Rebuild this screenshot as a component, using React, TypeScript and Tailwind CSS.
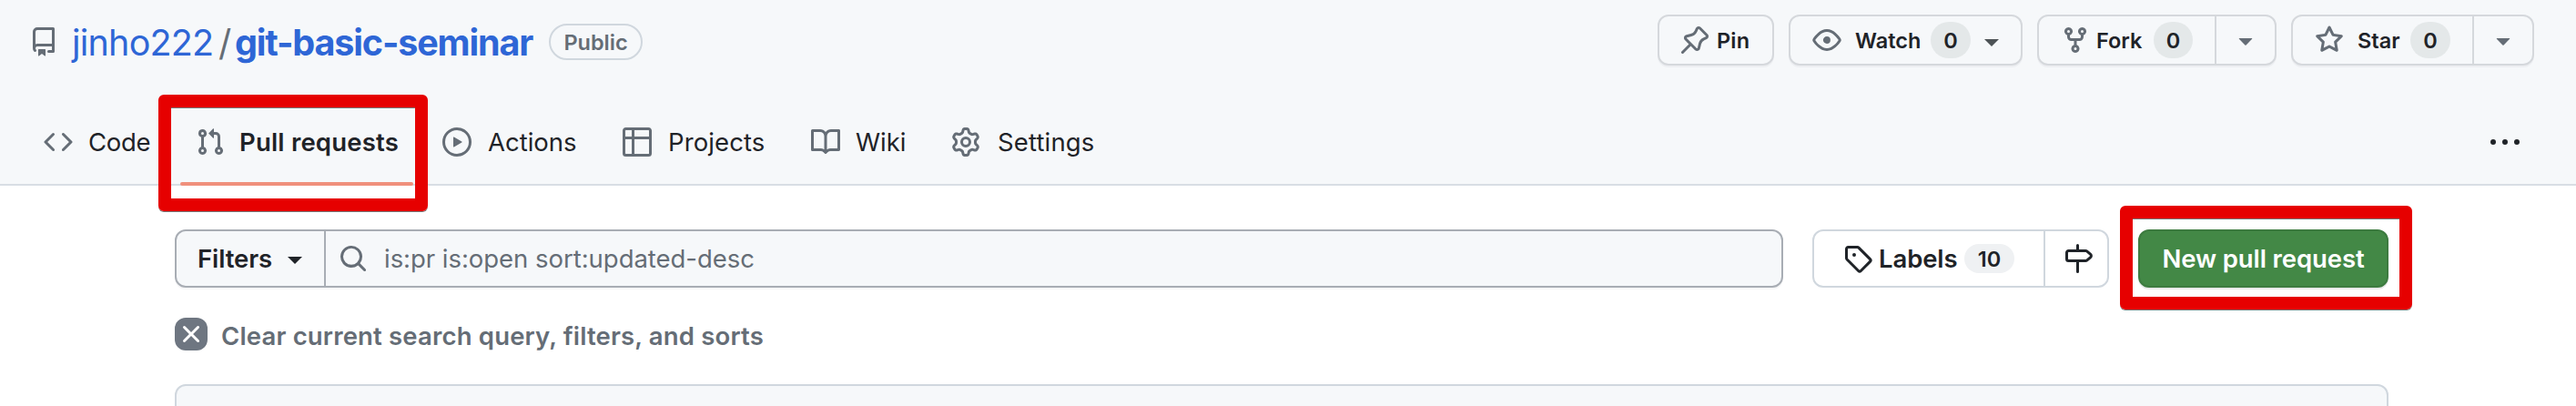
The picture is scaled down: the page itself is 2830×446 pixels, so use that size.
import type { ReactNode } from "react";

const paths = {
  repo: "M2 2.5A2.5 2.5 0 0 1 4.5 0h8.75a.75.75 0 0 1 .75.75v12.5a.75.75 0 0 1-.75.75h-2.5a.75.75 0 0 1 0-1.5h1.75v-2h-8a1 1 0 0 0-.714 1.7.75.75 0 1 1-1.072 1.05A2.495 2.495 0 0 1 2 11.5Zm10.5-1h-8a1 1 0 0 0-1 1v6.708A2.486 2.486 0 0 1 4.5 9h8ZM5 12.25a.25.25 0 0 1 .25-.25h3.5a.25.25 0 0 1 .25.25v3.25a.25.25 0 0 1-.4.2l-1.45-1.087a.249.249 0 0 0-.3 0L5.4 15.7a.25.25 0 0 1-.4-.2Z",
  pin: "m11.294.984 3.722 3.722a1.75 1.75 0 0 1-.504 2.826l-1.327.613a3.089 3.089 0 0 0-1.707 2.084l-.584 2.454c-.317 1.332-1.972 1.8-2.94.832L5.75 11.311 1.78 15.28a.749.749 0 1 1-1.06-1.06l3.969-3.97-2.204-2.204c-.968-.968-.5-2.623.832-2.94l2.454-.584a3.08 3.08 0 0 0 2.084-1.707l.613-1.327a1.75 1.75 0 0 1 2.826-.504ZM6.283 9.723l2.732 2.731a.25.25 0 0 0 .42-.119l.584-2.454a4.586 4.586 0 0 1 2.537-3.098l1.328-.613a.25.25 0 0 0 .072-.404l-3.722-3.722a.25.25 0 0 0-.404.072l-.613 1.328a4.584 4.584 0 0 1-3.098 2.537l-2.454.584a.25.25 0 0 0-.119.42l2.731 2.732Z",
  eye: "M8 2c1.981 0 3.671.992 4.933 2.078 1.27 1.091 2.187 2.345 2.637 3.023a1.62 1.62 0 0 1 0 1.798c-.45.678-1.367 1.932-2.637 3.023C11.67 13.008 9.981 14 8 14c-1.981 0-3.671-.992-4.933-2.078C1.797 10.83.88 9.576.43 8.898a1.62 1.62 0 0 1 0-1.798c.45-.677 1.367-1.931 2.637-3.022C4.33 2.992 6.019 2 8 2ZM1.679 7.932a.12.12 0 0 0 0 .136c.411.622 1.241 1.75 2.366 2.717C5.176 11.758 6.527 12.5 8 12.5c1.473 0 2.825-.742 3.955-1.715 1.124-.967 1.954-2.096 2.366-2.717a.12.12 0 0 0 0-.136c-.412-.621-1.242-1.75-2.366-2.717C10.824 4.242 9.473 3.5 8 3.5c-1.473 0-2.825.742-3.955 1.715-1.124.967-1.954 2.096-2.366 2.717ZM8 10a2 2 0 1 1-.001-3.999A2 2 0 0 1 8 10Z",
  fork: "M5 5.372v.878c0 .414.336.75.75.75h4.5a.75.75 0 0 0 .75-.75v-.878a2.25 2.25 0 1 1 1.5 0v.878a2.25 2.25 0 0 1-2.25 2.25h-1.5v2.128a2.251 2.251 0 1 1-1.5 0V8.5h-1.5A2.25 2.25 0 0 1 3.5 6.25v-.878a2.25 2.25 0 1 1 1.5 0ZM5 3.25a.75.75 0 1 0-1.5 0 .75.75 0 0 0 1.5 0Zm6.75.75a.75.75 0 1 0 0-1.5.75.75 0 0 0 0 1.5Zm-3 8.75a.75.75 0 1 0-1.5 0 .75.75 0 0 0 1.5 0Z",
  star: "M8 .25a.75.75 0 0 1 .673.418l1.882 3.815 4.21.612a.75.75 0 0 1 .416 1.279l-3.046 2.97.719 4.192a.751.751 0 0 1-1.088.791L8 12.347l-3.766 1.98a.75.75 0 0 1-1.088-.79l.72-4.194L.818 6.374a.75.75 0 0 1 .416-1.28l4.21-.611L7.327.668A.75.75 0 0 1 8 .25Zm0 2.445L6.615 5.5a.75.75 0 0 1-.564.41l-3.097.45 2.24 2.184a.75.75 0 0 1 .216.664l-.528 3.084 2.769-1.456a.75.75 0 0 1 .698 0l2.77 1.456-.53-3.084a.75.75 0 0 1 .216-.664l2.24-2.183-3.096-.45a.75.75 0 0 1-.564-.41L8 2.694Z",
  code: "m11.28 3.22 4.25 4.25a.75.75 0 0 1 0 1.06l-4.25 4.25a.749.749 0 0 1-1.275-.326.749.749 0 0 1 .215-.734L13.94 8l-3.72-3.72a.749.749 0 0 1 .326-1.275.749.749 0 0 1 .734.215Zm-6.56 0a.751.751 0 0 1 1.042.018.751.751 0 0 1 .018 1.042L2.06 8l3.72 3.72a.749.749 0 0 1-.326 1.275.749.749 0 0 1-.734-.215L.47 8.53a.75.75 0 0 1 0-1.06Z",
  pull: "M1.5 3.25a2.25 2.25 0 1 1 3 2.122v5.256a2.251 2.251 0 1 1-1.5 0V5.372A2.25 2.25 0 0 1 1.5 3.25Zm5.677-.177L9.573.677A.25.25 0 0 1 10 .854V2.5h1A2.5 2.5 0 0 1 13.5 5v5.628a2.251 2.251 0 1 1-1.5 0V5a1 1 0 0 0-1-1h-1v1.646a.25.25 0 0 1-.427.177L7.177 3.427a.25.25 0 0 1 0-.354ZM3.75 2.5a.75.75 0 1 0 0 1.5.75.75 0 0 0 0-1.5Zm0 9.5a.75.75 0 1 0 0 1.5.75.75 0 0 0 0-1.5Zm8.25.75a.75.75 0 1 0 1.5 0 .75.75 0 0 0-1.5 0Z",
  play: "M8 0a8 8 0 1 1 0 16A8 8 0 0 1 8 0ZM1.5 8a6.5 6.5 0 1 0 13 0 6.5 6.5 0 0 0-13 0Zm4.879-2.773 4.264 2.559a.25.25 0 0 1 0 .428l-4.264 2.559A.25.25 0 0 1 6 10.559V5.442a.25.25 0 0 1 .379-.215Z",
  table: "M0 1.75C0 .784.784 0 1.75 0h12.5C15.216 0 16 .784 16 1.75v12.5A1.75 1.75 0 0 1 14.25 16H1.75A1.75 1.75 0 0 1 0 14.25ZM6.5 6.5v8h7.75a.25.25 0 0 0 .25-.25V6.5Zm8-1.5V1.75a.25.25 0 0 0-.25-.25H6.5V5Zm-13 1.5v7.75c0 .138.112.25.25.25H5v-8ZM5 5V1.5H1.75a.25.25 0 0 0-.25.25V5Z",
  book: "M0 1.75A.75.75 0 0 1 .75 1h4.253c1.227 0 2.317.59 3 1.501A3.743 3.743 0 0 1 11.006 1h4.245a.75.75 0 0 1 .75.75v10.5a.75.75 0 0 1-.75.75h-4.507a2.25 2.25 0 0 0-1.591.659l-.622.621a.75.75 0 0 1-1.06 0l-.622-.621A2.25 2.25 0 0 0 5.258 13H.75a.75.75 0 0 1-.75-.75Zm7.251 10.324.004-5.073-.002-2.253A2.25 2.25 0 0 0 5.003 2.5H1.5v9h3.757a3.75 3.75 0 0 1 1.994.574ZM8.755 4.75l-.004 7.322a3.752 3.752 0 0 1 1.992-.572H14.5v-9h-3.495a2.25 2.25 0 0 0-2.25 2.25Z",
  gear: "M8 0a8.2 8.2 0 0 1 .701.031C9.444.095 9.99.645 10.16 1.29l.288 1.107c.018.066.079.158.212.224.231.114.454.243.668.386.123.082.233.09.299.071l1.103-.303c.644-.176 1.392.021 1.82.63.27.385.506.792.704 1.218.315.675.111 1.422-.364 1.891l-.814.806c-.049.048-.098.147-.088.294.016.257.016.515 0 .772-.01.147.038.246.088.294l.814.806c.475.469.679 1.216.364 1.891a7.977 7.977 0 0 1-.704 1.217c-.428.61-1.176.807-1.82.63l-1.102-.302c-.067-.019-.177-.011-.3.071a5.909 5.909 0 0 1-.668.386c-.133.066-.194.158-.211.224l-.29 1.106c-.168.646-.715 1.196-1.458 1.26a8.006 8.006 0 0 1-1.402 0c-.743-.064-1.289-.614-1.458-1.26l-.289-1.106c-.018-.066-.079-.158-.212-.224a5.738 5.738 0 0 1-.668-.386c-.123-.082-.233-.09-.299-.071l-1.103.303c-.644.176-1.392-.021-1.82-.63a8.12 8.12 0 0 1-.704-1.218c-.315-.675-.111-1.422.363-1.891l.815-.806c.05-.048.098-.147.088-.294a6.214 6.214 0 0 1 0-.772c.01-.147-.038-.246-.088-.294l-.815-.806C.635 6.045.431 5.298.746 4.623a7.92 7.92 0 0 1 .704-1.217c.428-.61 1.176-.807 1.82-.63l1.102.302c.067.019.177.011.3-.071.214-.143.437-.272.668-.386.133-.066.194-.158.211-.224l.29-1.106C6.009.645 6.556.095 7.299.03 7.53.01 7.764 0 8 0Zm-.571 1.525c-.036.003-.108.036-.137.146l-.289 1.105c-.147.561-.549.967-.998 1.189-.173.086-.34.183-.5.29-.417.278-.97.423-1.529.27l-1.103-.303c-.109-.03-.175.016-.195.045-.22.312-.412.644-.573.99-.014.031-.021.11.059.19l.815.806c.411.406.562.957.53 1.456a4.709 4.709 0 0 0 0 .582c.032.499-.119 1.05-.53 1.456l-.815.806c-.081.08-.073.159-.059.19.162.346.353.677.573.989.02.03.085.076.195.046l1.102-.303c.56-.153 1.113-.008 1.53.27.161.107.328.204.501.29.447.222.85.629.997 1.189l.289 1.105c.029.109.101.143.137.146a6.6 6.6 0 0 0 1.142 0c.036-.003.108-.036.137-.146l.289-1.105c.147-.561.549-.967.998-1.189.173-.086.34-.183.5-.29.417-.278.97-.423 1.529-.27l1.103.303c.109.029.175-.016.195-.045.22-.313.411-.644.573-.99.014-.031.021-.11-.059-.19l-.815-.806c-.411-.406-.562-.957-.53-1.456a4.709 4.709 0 0 0 0-.582c-.032-.499.119-1.05.53-1.456l.815-.806c.081-.08.073-.159.059-.19a6.464 6.464 0 0 0-.573-.989c-.02-.03-.085-.076-.195-.046l-1.102.303c-.56.153-1.113.008-1.53-.27a4.44 4.44 0 0 0-.501-.29c-.447-.222-.85-.629-.997-1.189l-.289-1.105c-.029-.11-.101-.143-.137-.146a6.6 6.6 0 0 0-1.142 0ZM11 8a3 3 0 1 1-6 0 3 3 0 0 1 6 0ZM9.5 8a1.5 1.5 0 1 0-3.001.001A1.5 1.5 0 0 0 9.5 8Z",
  search: "M10.68 11.74a6 6 0 0 1-7.922-8.982 6 6 0 0 1 8.982 7.922l3.04 3.04a.749.749 0 0 1-.326 1.275.749.749 0 0 1-.734-.215ZM11.5 7a4.499 4.499 0 1 0-8.997 0A4.499 4.499 0 0 0 11.5 7Z",
  x: "M3.72 3.72a.75.75 0 0 1 1.06 0L8 6.94l3.22-3.22a.749.749 0 0 1 1.275.326.749.749 0 0 1-.215.734L9.06 8l3.22 3.22a.749.749 0 0 1-.326 1.275.749.749 0 0 1-.734-.215L8 9.06l-3.22 3.22a.751.751 0 0 1-1.042-.018.751.751 0 0 1-.018-1.042L6.94 8 3.72 4.78a.75.75 0 0 1 0-1.06Z",
  tag: "M1 7.775V2.75C1 1.784 1.784 1 2.75 1h5.025c.464 0 .91.184 1.238.513l6.25 6.25a1.75 1.75 0 0 1 0 2.474l-5.026 5.026a1.75 1.75 0 0 1-2.474 0l-6.25-6.25A1.752 1.752 0 0 1 1 7.775Zm1.5 0c0 .066.026.13.073.177l6.25 6.25a.25.25 0 0 0 .354 0l5.025-5.025a.25.25 0 0 0 0-.354l-6.25-6.25a.25.25 0 0 0-.177-.073H2.75a.25.25 0 0 0-.25.25ZM6 5a1 1 0 1 1 0 2 1 1 0 0 1 0-2Z",
  milestone: "M7.75 0a.75.75 0 0 1 .75.75V3h3.634c.414 0 .814.147 1.13.414l2.07 1.75a1.75 1.75 0 0 1 0 2.672l-2.07 1.75a1.75 1.75 0 0 1-1.13.414H8.5v5.25a.75.75 0 0 1-1.5 0V10H2.75A1.75 1.75 0 0 1 1 8.25v-3.5C1 3.784 1.784 3 2.75 3H7V.75A.75.75 0 0 1 7.75 0Zm4.384 8.5a.25.25 0 0 0 .161-.06l2.07-1.75a.248.248 0 0 0 0-.38l-2.07-1.75a.25.25 0 0 0-.161-.06H2.75a.25.25 0 0 0-.25.25v3.5c0 .138.112.25.25.25h9.384Z",
  triangle: "m4.427 7.427 3.396 3.396a.25.25 0 0 0 .354 0l3.396-3.396A.25.25 0 0 0 11.396 7H4.604a.25.25 0 0 0-.177.427Z",
  caret: "M4 6h8l-4 4Z",
  dots: "M0 8a1.5 1.5 0 1 0 3 0 1.5 1.5 0 1 0-3 0Zm6.5 0a1.5 1.5 0 1 0 3 0 1.5 1.5 0 1 0-3 0ZM13 8a1.5 1.5 0 1 0 3 0 1.5 1.5 0 1 0-3 0Z",
};

function Icon({ name, className = "" }: { name: keyof typeof paths; className?: string }) {
  return (
    <svg viewBox="0 0 16 16" fill="currentColor" aria-hidden="true" className={`size-8 shrink-0 ${className}`}>
      <path d={paths[name]} />
    </svg>
  );
}

function Count({ className = "w-11" }: { className?: string }) {
  return (
    <span className={`flex h-10 shrink-0 items-center justify-center rounded-full bg-[#e4e8e9] pt-px ${className}`}>0</span>
  );
}

function Group({ className = "", children }: { className?: string; children: ReactNode }) {
  return (
    <div
      className={`flex h-14 shrink-0 items-center rounded-xl border-2 border-[#d5d8dc] bg-[#f6f8fa] text-[23.5px] font-[560] shadow-[0_2px_0_rgba(31,35,40,0.04)] ${className}`}
    >
      {children}
    </div>
  );
}

function Tab({
  icon,
  label,
  className = "px-4",
  text = "ml-[17px]",
  active = false,
}: {
  icon: keyof typeof paths;
  label: string;
  className?: string;
  text?: string;
  active?: boolean;
}) {
  return (
    <a className={`relative flex h-[88px] shrink-0 items-center ${className}`}>
      <Icon name={icon} className="text-[#656d76]" />
      <span className={`pt-px ${text}`}>{label}</span>
      {active && <span className="absolute top-[88px] left-0 h-1 w-[256px] rounded-full bg-[#f0907c]" />}
    </a>
  );
}

export default function App() {
  return (
    <div className="relative h-[446px] w-[2830px] overflow-hidden bg-white font-['Inter',sans-serif] leading-none whitespace-nowrap text-[#1f2328]">
      <header className="h-[204px] border-b-2 border-[#d8dee4] bg-[#f6f8fa]">
        <div className="flex h-[92px] items-start justify-between pr-[46px] pl-8">
          <div className="flex h-[92px] items-center">
            <Icon name="repo" className="text-[#656d76]" />
            <a className="ml-[15px] w-[161px] pt-[2px] text-[39.5px] leading-[50px] tracking-[-0.8px] text-[#2e66d6]">jinho222</a>
            <span className="w-[18px] pt-[2px] text-[39.5px] leading-[50px] text-[#656d76]">/</span>
            <a className="w-[345px] pt-[2px] text-[39.5px] leading-[50px] font-bold tracking-[-1.15px] text-[#2e66d6]">git-basic-seminar</a>
            <span className="flex h-10 w-[103px] items-center justify-center rounded-full border-2 border-[#d0d7de] pt-px text-[23.5px] font-[560] text-[#656d76]">
              Public
            </span>
          </div>
          <div className="flex h-[88px] items-center gap-4">
            <Group className="w-[128px]">
              <Icon name="pin" className="ml-[23px] text-[#656d76]" />
              <span className="ml-[8px] pt-px tracking-[0.2px]">Pin</span>
            </Group>
            <Group className="w-[257px]">
              <Icon name="eye" className="ml-[24px] text-[#656d76]" />
              <span className="ml-[15px] w-[83px] pt-px">Watch</span>
              <Count />
              <Icon name="caret" className="mt-[6px] ml-[7px] text-[#4d5356]" />
            </Group>
            <Group className="w-[263px]">
              <Icon name="fork" className="ml-[24px] text-[#656d76]" />
              <span className="ml-[7px] w-[63px] pt-px">Fork</span>
              <Count className="w-[43px]" />
              <span className="ml-[24px] flex h-[52px] flex-1 items-center justify-center border-l-2 border-[#d5d8dc]">
                <Icon name="triangle" className="text-[#656d76]" />
              </span>
            </Group>
            <Group className="w-[267px]">
              <Icon name="star" className="ml-[24px] text-[#656d76]" />
              <span className="ml-[15px] w-[58px] pt-px">Star</span>
              <Count />
              <span className="ml-[24px] flex h-[52px] flex-1 items-center justify-center border-l-2 border-[#d5d8dc]">
                <Icon name="triangle" className="text-[#656d76]" />
              </span>
            </Group>
          </div>
        </div>
        <nav className="mt-5 flex items-center pr-[62px] pl-8 text-[27.5px]">
          <Tab icon="code" label="Code" className="w-[166px] px-4" text="ml-[17px] tracking-[-0.3px]" />
          <Tab icon="pull" label="Pull requests" className="w-[272px] pl-[17px]" text="ml-[16px] font-semibold tracking-[0.2px]" active />
          <Tab icon="play" label="Actions" className="w-[197px] px-4" text="ml-[18px]" />
          <Tab icon="table" label="Projects" className="w-[208px] pl-[17px]" text="ml-[18px] tracking-[0.1px]" />
          <Tab icon="book" label="Wiki" className="w-[154px] px-4" />
          <Tab icon="gear" label="Settings" className="px-4" text="ml-[19px] tracking-[0.15px]" />
          <Icon name="dots" className="ml-auto" />
        </nav>
      </header>

      <main className="pl-48 text-[27.5px]">
        <div className="mt-12 flex items-center font-[560]">
          <div className="flex h-16 w-[1767px] items-center overflow-hidden rounded-xl border-2 border-[#a8adb4] bg-[#f6f8fa] shadow-[0_2px_0_rgba(31,35,40,0.04)]">
            <button className="flex h-full w-[164px] items-center border-r-2 border-[#a8adb4] pl-[23px]">
              <span className="w-[83px] pt-px text-left tracking-[-0.1px]">Filters</span>
              <Icon name="caret" className="mt-1 ml-[8px]" />
            </button>
            <Icon name="search" className="ml-[14px] text-[#656d76]" />
            <span className="ml-[18px] pt-px font-normal tracking-[-0.03px] text-[#656d76]">is:pr is:open sort:updated-desc</span>
          </div>
          <div className="ml-8 flex h-16 w-[326px] items-center rounded-xl border-2 border-[#d0d7de]">
            <div className="flex h-full w-[254px] items-center border-r-2 border-[#d0d7de]">
              <Icon name="tag" className="ml-[32px]" />
              <span className="ml-[7px] w-[94px] pt-px tracking-[-0.1px]">Labels</span>
              <span className="flex h-8 w-[55px] items-center justify-center rounded-full bg-[#eff1f3] pt-px text-[23.5px]">10</span>
            </div>
            <Icon name="milestone" className="ml-[20px]" />
          </div>
          <button className="ml-8 flex h-16 w-[275px] items-center justify-center rounded-xl border-2 border-[#3d7b40] bg-[#438846] pt-px tracking-[-0.1px] text-white shadow-[0_2px_0_rgba(31,35,40,0.1)]">
            New pull request
          </button>
        </div>
        <div className="mt-[33px] flex h-9 items-center font-semibold text-[#656d76]">
          <span className="flex size-9 items-center justify-center rounded-xl bg-[#6e7681] text-white">
            <Icon name="x" />
          </span>
          <span className="ml-[15px] pt-[5px] tracking-[0.17px]">Clear current search query, filters, and sorts</span>
        </div>
        <div className="mt-[37px] h-[60px] w-[2432px] rounded-xl border-2 border-[#d0d7de] bg-[#f6f8fa]" />
      </main>

      <div className="absolute top-[104px] left-[174px] h-[128px] w-[296px] rounded-md border-14 border-[#e60000] shadow-[0_1px_0_#777,inset_0_1px_0_#777]" />
      <div className="absolute top-[226px] left-[2329px] h-[114px] w-[321px] rounded-md border-14 border-[#e60000] shadow-[0_1px_0_#777,inset_0_1px_0_#777]" />
    </div>
  );
}
